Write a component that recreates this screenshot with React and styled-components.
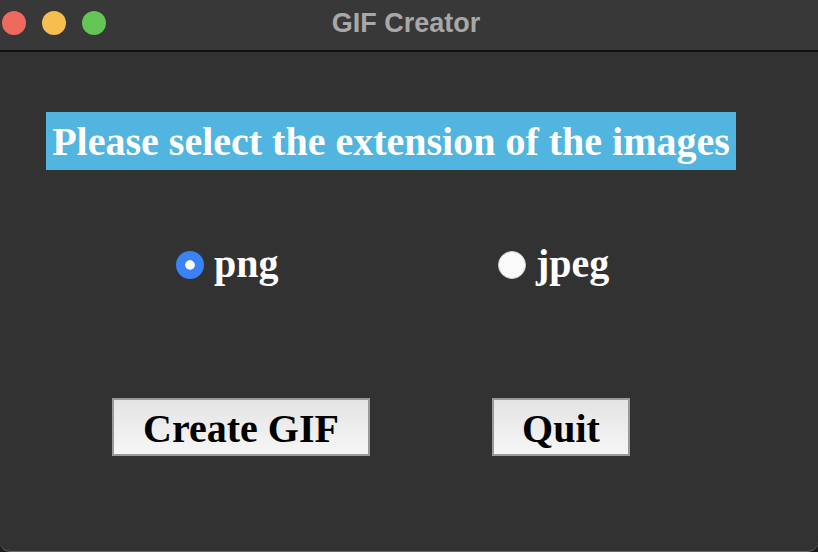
import React, { useState } from 'react'
import styled, { createGlobalStyle } from 'styled-components'

const Global = createGlobalStyle`
  html, body { margin: 0; padding: 0; background: #1e1e1e; }
  body { width: 818px; height: 552px; overflow: hidden; }
`

const App = () => {
  const [ext, setExt] = useState('png')
  return (
    <>
      <Global />
      <Window>
        <TitleBar>
          <Lights>
            <Light color="#ee6a5f" />
            <Light color="#f5be4f" />
            <Light color="#62c554" />
          </Lights>
          <Title>GIF Creator</Title>
        </TitleBar>
        <Body>
          <Banner>Please select the extension of the images</Banner>
          <RadioRow>
            <RadioItem onClick={() => setExt('png')}>
              <Dot checked={ext === 'png'} />
              <RadioLabel>png</RadioLabel>
            </RadioItem>
            <RadioItem onClick={() => setExt('jpeg')}>
              <Dot checked={ext === 'jpeg'} />
              <RadioLabel>jpeg</RadioLabel>
            </RadioItem>
          </RadioRow>
          <ButtonRow>
            <Button width="258px">Create GIF</Button>
            <Button width="138px">Quit</Button>
          </ButtonRow>
        </Body>
      </Window>
    </>
  )
}

export default App

const Window = styled.div`
  width: 818px;
  height: 552px;
  box-sizing: border-box;
  background: #323232;
  border-radius: 0 0 10px 10px;
  border-bottom: 1px solid #6a6a6a;
  overflow: hidden;
  display: flex;
  flex-direction: column;
`
const TitleBar = styled.div`
  height: 52px;
  flex: none;
  box-sizing: border-box;
  background: #383838;
  border-bottom: 2px solid #111;
  position: relative;
  display: flex;
  align-items: center;
  justify-content: center;
`
const Lights = styled.div`
  position: absolute;
  left: 2px;
  top: 11px;
  display: flex;
  gap: 16px;
`
const Light = styled.span`
  width: 24px;
  height: 24px;
  border-radius: 50%;
  background: ${p => p.color};
`
const Title = styled.div`
  font-family: "Liberation Sans", Arial, sans-serif;
  font-weight: bold;
  font-size: 27px;
  color: #a8a8a8;
  margin-left: -6px;
  margin-top: -4px;
`
const Body = styled.div`
  flex: 1;
  display: flex;
  flex-direction: column;
  align-items: flex-start;
  padding-top: 60px;
  font-family: "Liberation Serif", "Times New Roman", serif;
  font-weight: bold;
`
const Banner = styled.div`
  margin-left: 46px;
  width: 690px;
  height: 58px;
  box-sizing: border-box;
  background: #51b5e0;
  color: #fff;
  font-size: 40px;
  line-height: 60px;
  text-align: center;
  white-space: nowrap;
`
const RadioRow = styled.div`
  margin-top: 81px;
  margin-left: 176px;
  display: grid;
  grid-template-columns: 322px auto;
  height: 28px;
  align-items: center;
`
const RadioItem = styled.div`
  display: flex;
  align-items: center;
  gap: 10px;
  cursor: pointer;
`
const Dot = styled.span`
  width: 28px;
  height: 28px;
  border-radius: 50%;
  box-sizing: border-box;
  background: ${p => (p.checked ? '#3b82f6' : '#fbfbfb')};
  border: ${p => (p.checked ? '9px solid #3b82f6' : '1px solid #cfcfcf')};
  box-shadow: ${p => (p.checked ? 'inset 0 0 0 10px #fff' : 'none')};
  flex: none;
`
const RadioLabel = styled.span`
  color: #fff;
  font-size: 40px;
  line-height: 28px;
  position: relative;
  top: -1px;
`
const ButtonRow = styled.div`
  margin-top: 119px;
  margin-left: 112px;
  display: flex;
  gap: 122px;
`
const Button = styled.button`
  width: ${p => p.width};
  height: 58px;
  box-sizing: border-box;
  border: 2px solid #9a9a9a;
  background: linear-gradient(#e4e4e4, #f6f6f6);
  color: #000;
  font-family: "Liberation Serif", "Times New Roman", serif;
  font-weight: bold;
  font-size: 40px;
  padding: 0;
  padding-top: 2px;
`
